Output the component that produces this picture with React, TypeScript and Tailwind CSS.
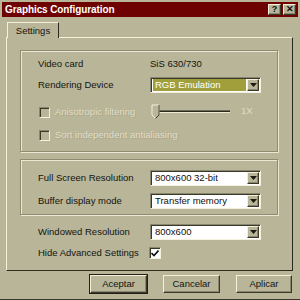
import React from "react";

const raised =
  "border border-t-[#f4f0dc] border-l-[#f4f0dc] border-r-[#3a3826] border-b-[#3a3826] shadow-[inset_-1px_-1px_0_#8a8770]";
const sunken =
  "border border-t-[#8a8770] border-l-[#8a8770] border-r-[#f4f0dc] border-b-[#f4f0dc] shadow-[inset_1px_1px_0_#3a3826]";
const groupBox =
  "border border-[#8f8c72] shadow-[inset_1px_1px_0_#ebe7d2,1px_1px_0_#ebe7d2]";

function Arrow() {
  return (
    <svg width="7" height="4" viewBox="0 0 7 4">
      <path d="M0 0h7L3.5 4z" fill="#1a1a10" />
    </svg>
  );
}

function Select({ value, highlight }: { value: string; highlight?: boolean }) {
  return (
    <div className={`w-[111px] h-[16px] bg-white flex items-stretch ${sunken}`}>
      <div className="flex-1 flex items-center pl-[2px] pr-[1px] py-[1px]">
        <div
          className={`flex-1 h-full flex items-center pl-[2px] ${
            highlight ? "bg-[#a09f3c] text-white" : "text-[#101010]"
          }`}
        >
          {value}
        </div>
      </div>
      <div className={`w-[12px] my-[1px] mr-[1px] bg-[#b8b598] flex items-center justify-center ${raised}`}>
        <Arrow />
      </div>
    </div>
  );
}

function Label({ children }: { children: React.ReactNode }) {
  return <div className="w-[112px] text-[#141410]">{children}</div>;
}

function DisabledCheck({ label }: { label: string }) {
  return (
    <div className="flex items-center h-[16px]">
      <div className={`w-[11px] h-[11px] bg-[#b8b598] ml-[1px] ${sunken}`} />
      <span className="ml-[5px] text-[#e0dcc6] [text-shadow:1px_1px_0_#aca88c]">{label}</span>
    </div>
  );
}

function Btn({ label, w, def }: { label: string; w: string; def?: boolean }) {
  return (
    <div
      className={`${w} h-[18px] flex items-center justify-center text-[#141410] ${
        def ? "outline outline-1 outline-[#202016]" : ""
      } ${raised}`}
    >
      {label}
    </div>
  );
}

export default function App() {
  return (
    <div
      className="w-[300px] h-[300px] bg-[#b8b598] overflow-hidden flex flex-col text-[9.5px] leading-none border-b border-[#3a3826]"
      style={{ fontFamily: '"Liberation Sans", Arial, sans-serif' }}
    >
      {/* title bar */}
      <div className="mx-[2px] mt-[2px] h-[15px] bg-[#6e0202] flex items-center justify-between pl-[3px] pr-[2px]">
        <span className="text-white font-bold text-[10px] tracking-[-0.1px]">Graphics Configuration</span>
        <div className="flex gap-[2px]">
          <div className={`w-[13px] h-[11px] bg-[#b8b598] flex items-center justify-center font-bold text-[9px] text-[#101010] ${raised}`}>
            ?
          </div>
          <div className={`w-[13px] h-[11px] bg-[#b8b598] flex items-center justify-center font-bold text-[9px] text-[#101010] ${raised}`}>
            ✕
          </div>
        </div>
      </div>

      {/* tab */}
      <div className="ml-[7px] mt-[5px] w-[52px] h-[16px] border-t border-l border-r border-t-[#f4f0dc] border-l-[#f4f0dc] border-r-[#2c2a1c] flex items-center justify-center text-[#141410] relative z-10 bg-[#b8b598] -mb-[1px]">
        Settings
      </div>

      {/* panel */}
      <div className="ml-[6px] w-[287px] h-[234px] border border-t-[#f4f0dc] border-l-[#f4f0dc] border-r-[#2c2a1c] border-b-[#2c2a1c] flex flex-col">
        {/* group 1 */}
        <div className={`ml-[13px] mt-[12px] w-[258px] h-[102px] pl-[17px] pt-[5px] flex flex-col ${groupBox}`}>
          <div className="flex items-center h-[16px]">
            <Label>Video card</Label>
            <span className="text-[#141410]">SiS 630/730</span>
          </div>
          <div className="flex items-center h-[16px] mt-[5px]">
            <Label>Rendering Device</Label>
            <Select value="RGB Emulation" highlight />
          </div>
          <div className="flex items-center h-[16px] mt-[11px]">
            <div className="w-[112px]">
              <DisabledCheck label="Anisotropic filtering" />
            </div>
            <svg width="112" height="16" viewBox="0 0 112 16" className="ml-[1px]">
              <rect x="2" y="6" width="77" height="1" fill="#6e6c56" />
              <rect x="2" y="7" width="77" height="1" fill="#2c2a1c" />
              <rect x="2" y="8" width="77" height="1" fill="#eeead6" />
              <path d="M1 1h7v10l-3.5 3.5L1 11z" fill="#b8b598" stroke="#f4f0dc" strokeWidth="1" />
              <path d="M8 1v10l-3.5 3.5" fill="none" stroke="#3a3826" strokeWidth="1" />
              <text x="90" y="10" fontSize="9.5" fill="#e0dcc6" fontFamily="Liberation Sans, Arial, sans-serif">1X</text>
            </svg>
          </div>
          <div className="mt-[7px]">
            <DisabledCheck label="Sort independent antialiasing" />
          </div>
        </div>

        {/* group 2 */}
        <div className={`ml-[13px] mt-[7px] w-[258px] h-[56px] pl-[17px] pt-[10px] flex flex-col ${groupBox}`}>
          <div className="flex items-center h-[16px]">
            <Label>Full Screen Resolution</Label>
            <Select value="800x600 32-bit" />
          </div>
          <div className="flex items-center h-[16px] mt-[7px]">
            <Label>Buffer display mode</Label>
            <Select value="Transfer memory" />
          </div>
        </div>

        <div className="ml-[31px] mt-[9px] flex items-center h-[16px]">
          <Label>Windowed Resolution</Label>
          <Select value="800x600" />
        </div>
        <div className="ml-[31px] mt-[5px] flex items-center h-[16px]">
          <Label>Hide Advanced Settings</Label>
          <div className={`w-[12px] h-[12px] bg-white flex items-center justify-center -ml-[1px] ${sunken}`}>
            <svg width="8" height="7" viewBox="0 0 8 7">
              <path d="M0.5 3l2.5 2.5L7.5 0.5" fill="none" stroke="#101010" strokeWidth="1.6" />
            </svg>
          </div>
        </div>
      </div>

      {/* buttons */}
      <div className="flex mt-[4px] ml-[90px] gap-[16px]">
        <Btn label="Aceptar" w="w-[57px]" def />
        <Btn label="Cancelar" w="w-[57px]" />
        <Btn label="Aplicar" w="w-[56px]" />
      </div>
    </div>
  );
}
